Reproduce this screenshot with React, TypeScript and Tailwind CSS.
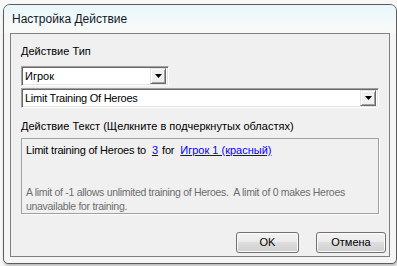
import React from 'react';

function Arrow() {
  return (
    <svg width="7" height="4" viewBox="0 0 7 4" className="block">
      <path d="M0 0h7L3.5 4z" fill="#000" />
    </svg>
  );
}

function Combo({ label, width, latin }: { label: string; width: string; latin?: boolean }) {
  return (
    <div
      className={`${width} h-[20px] flex items-center bg-white border border-t-[#a0a0a0] border-l-[#a0a0a0] border-r-white border-b-white shadow-[inset_1px_1px_0_#696969,inset_-1px_-1px_0_#e3e3e3] pl-[3px] pr-[2px]`}
    >
      <span className={`flex-1 text-[11px] leading-[13px] text-black ${latin ? 'tracking-[-0.25px]' : ''}`}>{label}</span>
      <div className="w-[16px] h-[16px] flex items-center justify-center bg-[#f0f0f0] border border-t-[#e3e3e3] border-l-[#e3e3e3] border-r-[#696969] border-b-[#696969] shadow-[inset_1px_1px_0_#fff,inset_-1px_-1px_0_#a0a0a0]">
        <Arrow />
      </div>
    </div>
  );
}

function Button({ label, width }: { label: string; width: string }) {
  return (
    <div
      className={`${width} h-[21px] flex items-center justify-center rounded-[3px] border border-[#707070] bg-[linear-gradient(#f2f2f2_0%,#ebebeb_50%,#dddddd_50%,#cfcfcf_100%)] shadow-[inset_0_0_0_1px_#fcfcfc] text-[11px] text-black`}
    >
      {label}
    </div>
  );
}

export default function App() {
  return (
    <div className="w-[397px] h-[266px] bg-[#f7f7f7] pl-[3px] pt-[4px] font-['Liberation_Sans',Arial,sans-serif] overflow-hidden">
      <div className="w-[394px] h-[260px] flex flex-col rounded-t-[7px] rounded-b-[5px] border border-[#5c5c5c] bg-[#f5f5f5] shadow-[1px_2px_3px_rgba(0,0,0,0.25)] overflow-hidden">
        {/* title bar */}
        <div className="h-[28px] flex items-center pl-[8px] pb-[1px] bg-[linear-gradient(to_bottom,#e6f7fa,#f8f9f9_75%)] text-[12px] text-[#101828]">
          Настройка Действие
        </div>

        {/* client area */}
        <div className="mx-[6px] mb-[6px] flex-1 flex flex-col border border-[#7f7f7f] bg-[#f0f0f0] px-[10px] pt-[11px]">
          <div className="text-[11px] leading-[13px] text-black">Действие Тип</div>
          <div className="mt-[8px]">
            <Combo label="Игрок" width="w-[148px]" />
          </div>
          <div className="mt-[2px]">
            <Combo label="Limit Training Of Heroes" width="w-[358px]" latin />
          </div>
          <div className="mt-[12px] text-[11px] leading-[13px] text-black">
            Действие Текст (Щелкните в подчеркнутых областях)
          </div>
          <div className="mt-[5px] w-[358px] h-[76px] border border-[#a0a0a0] shadow-[1px_1px_0_#fff] bg-[#f0f0f0] pl-[4px] pt-[5px] text-[11px] leading-[13px] overflow-hidden">
            <div className="text-black whitespace-nowrap">
              <span className="tracking-[-0.2px]">Limit training of Heroes to</span>
              <span className="ml-[6px] text-[#0000ff] underline">3</span>
              <span className="ml-[4px] tracking-[-0.2px]">for</span>
              <span className="ml-[6px] text-[#0000ff] underline">Игрок 1 (красный)</span>
            </div>
            <div className="mt-[28px] text-[#6d6d6d] text-[10.5px] leading-[14px] tracking-[-0.3px] whitespace-pre">
              {'A limit of -1 allows unlimited training of Heroes.  A limit of 0 makes Heroes\nunavailable for training.'}
            </div>
          </div>
          <div className="mt-[18px] flex justify-end gap-[17px] mr-[-7px]">
            <Button label="OK" width="w-[63px]" />
            <Button label="Отмена" width="w-[70px]" />
          </div>
        </div>
      </div>
    </div>
  );
}
